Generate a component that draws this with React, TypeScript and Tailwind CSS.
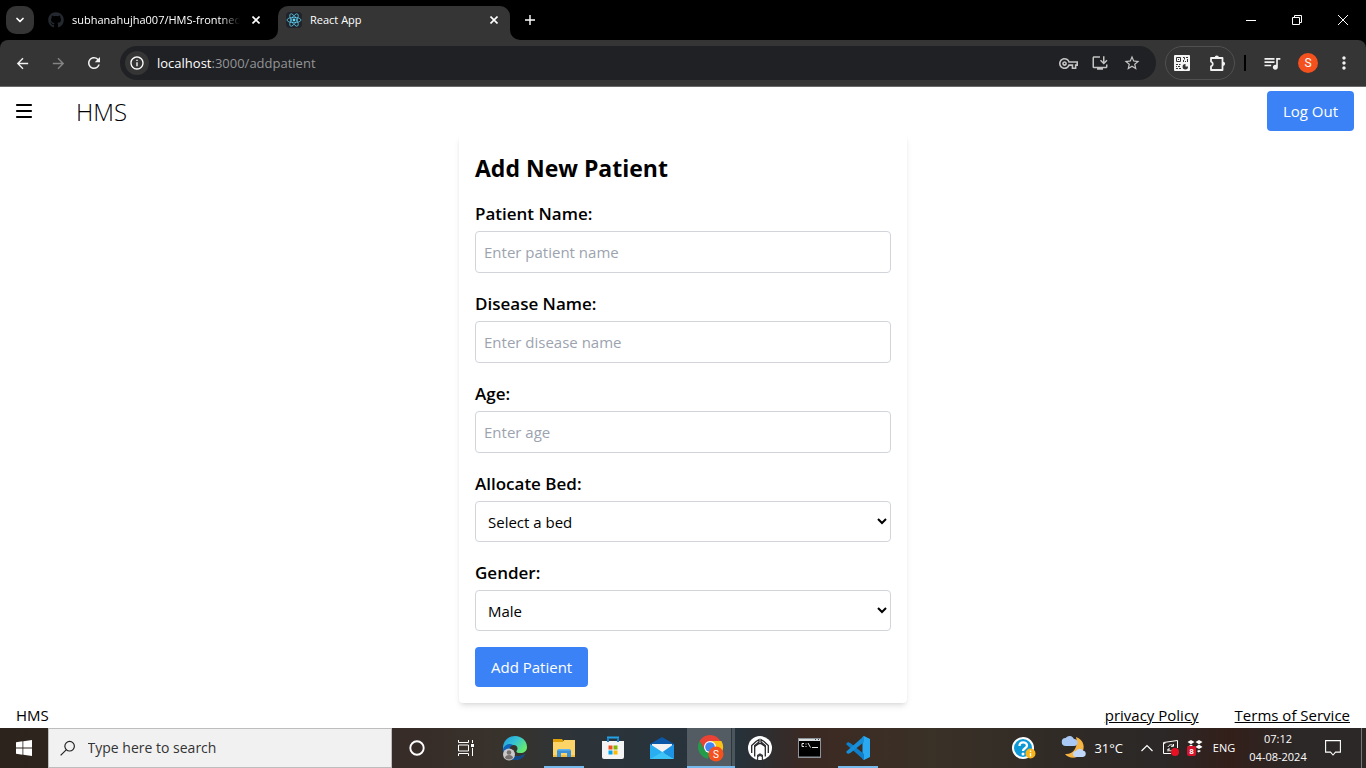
import React, { useState } from "react";
import {
  MdArrowBack,
  MdArrowForward,
  MdInfoOutline,
  MdMoreVert,
  MdOutlineInstallDesktop,
  MdOutlineVpnKey,
  MdQueueMusic,
  MdRefresh,
  MdStarOutline,
} from "react-icons/md";
import { FaGithub } from "react-icons/fa";
import { ChevronDown } from "lucide-react";

type Children = { children: React.ReactNode };

function CloseIcon() {
  return (
    <svg width="8" height="8" viewBox="0 0 8 8" fill="none" stroke="#fff" strokeWidth="1.6">
      <path d="M0.5 0.5 7.5 7.5M7.5 0.5 0.5 7.5" />
    </svg>
  );
}

function ReactLogo() {
  return (
    <svg width="16" height="16" viewBox="0 0 16 16" className="rounded-sm bg-[#20232a]">
      <g fill="none" stroke="#61dafb" strokeWidth="0.7">
        <ellipse cx="8" cy="8" rx="7" ry="2.7" />
        <ellipse cx="8" cy="8" rx="7" ry="2.7" transform="rotate(60 8 8)" />
        <ellipse cx="8" cy="8" rx="7" ry="2.7" transform="rotate(120 8 8)" />
      </g>
      <circle cx="8" cy="8" r="1.4" fill="#61dafb" />
    </svg>
  );
}

function TabStrip() {
  return (
    <div className="flex h-10 bg-black text-[12px] text-white">
      <div className="flex w-[268px] items-center pl-1.5">
        <button aria-label="Search tabs" className="flex size-7 items-center justify-center rounded-[10px] bg-[#353535]">
          <ChevronDown size={12} strokeWidth={3.5} />
        </button>
        <div className="ml-3.5 flex flex-1 items-center">
          <FaGithub size={16} color="#24292f" />
          <span className="ml-2 w-[168px] overflow-hidden whitespace-nowrap text-[11px] [mask-image:linear-gradient(to_right,#000_88%,transparent)]">
            subhanahujha007/HMS-frontned
          </span>
          <button aria-label="Close tab" className="ml-3"><CloseIcon /></button>
        </div>
      </div>
      <div className="flex w-2.5 items-end bg-[#353535]">
        <div className="h-10 w-2.5 rounded-br-[10px] bg-black" />
      </div>
      <div className="flex w-[232px] flex-col bg-black pt-1.5">
        <div className="flex flex-1 items-center rounded-t-[10px] bg-[#353535] pb-1.5 pl-2 pr-3">
          <ReactLogo />
          <span className="ml-2 flex-1 text-[11px]">React App</span>
          <button aria-label="Close tab"><CloseIcon /></button>
        </div>
      </div>
      <div className="flex flex-1 bg-[#353535]">
        <div className="flex flex-1 items-center rounded-bl-[10px] bg-black pl-[15px]">
          <button aria-label="New tab">
            <svg width="10" height="10" viewBox="0 0 10 10" stroke="#fff" strokeWidth="1.4"><path d="M5 0V10M0 5H10" /></svg>
          </button>
          <div className="flex-1" />
          <button aria-label="Minimize" className="flex w-[46px] justify-center">
            <svg width="10" height="10" viewBox="0 0 10 10"><path d="M0 5h10v1H0z" fill="#fff" /></svg>
          </button>
          <button aria-label="Restore" className="flex w-[46px] justify-center">
            <svg width="10" height="10" viewBox="0 0 10 10" fill="none" stroke="#fff"><path d="M.5 2.500h7v7h-7zM2.500 2.500v-2h7v7h-2" /></svg>
          </button>
          <button aria-label="Close" className="flex w-[46px] justify-center">
            <svg width="10" height="10" viewBox="0 0 10 10" stroke="#fff"><path d="M0 0 10 10M10 0 0 10" /></svg>
          </button>
        </div>
      </div>
    </div>
  );
}

function ToolButton({ label, children }: Children & { label: string }) {
  return (
    <button aria-label={label} className="flex h-8 w-9 shrink-0 items-center justify-center text-[#f1f1f1]">
      {children}
    </button>
  );
}

function QrIcon() {
  return (
    <svg width="16" height="16" viewBox="0 0 16 16">
      <rect width="16" height="16" rx="1" fill="#f5f5f5" />
      <g fill="none" stroke="#353535">
        <path d="M2.500 2.500h4v4h-4zM9 2.500h1.500v2M9.500 5v2M11 6.500h1M13.500 2v1M13.500 4v3M2 9.500h2M5 9.500h1.500M2.500 11v1M4 11.500h2M2 13.500h2M5 13.500h2" />
      </g>
      <path d="M4 4h1v1H4zM12 2h1v1h-1z" fill="#353535" />
      <path d="M11.500 9v2.500H14a2.700 2.700 0 1 1-2.500-2.500z" fill="#353535" />
    </svg>
  );
}

function PuzzleIcon() {
  return (
    <svg width="18" height="18" viewBox="0 0 18 18">
      <path
        d="M2 4h11.500v12H2v-3.600a2.500 2.500 0 0 0 0-4.800z"
        fill="none"
        stroke="#f1f1f1"
        strokeWidth="1.800"
        strokeLinejoin="round"
      />
      <path d="M5.700 3.500a2.100 2.100 0 0 1 4.200 0zM14 7.700a2.100 2.100 0 0 1 0 4.200z" fill="#f1f1f1" />
    </svg>
  );
}

function Toolbar() {
  return (
    <div className="bg-black">
      <div className="flex h-[47px] items-center rounded-t-lg border-b border-[#6a6a6a] bg-[#353535] px-1">
        <ToolButton label="Back"><MdArrowBack size={17} /></ToolButton>
        <ToolButton label="Forward"><MdArrowForward size={17} color="#848484" /></ToolButton>
        <ToolButton label="Reload"><MdRefresh size={18} /></ToolButton>
        <div className="ml-2 flex h-[34px] min-w-0 flex-1 items-center rounded-full bg-[#202124] pl-[5px] pr-[9px]">
          <button aria-label="Site information" className="flex size-6 items-center justify-center rounded-full bg-[#353535] text-white">
            <MdInfoOutline size={16} />
          </button>
          <span className="ml-2 flex-1 text-[13px] text-[#939598]">
            <span className="text-white">localhost</span>:3000/addpatient
          </span>
          <div className="flex gap-[2px]">
            {[
              { label: "Passwords", icon: <MdOutlineVpnKey size={19} /> },
              { label: "Install app", icon: <MdOutlineInstallDesktop size={18} /> },
              { label: "Bookmark", icon: <MdStarOutline size={18} /> },
            ].map((b) => (
              <button key={b.label} aria-label={b.label} className="flex w-[30px] items-center justify-center text-[#c4c4c4]">
                {b.icon}
              </button>
            ))}
          </div>
        </div>
        <div className="ml-[9px] flex h-[34px] w-[70px] items-center justify-center rounded-full border border-[#505050]">
          <ToolButton label="QR code"><QrIcon /></ToolButton>
          <ToolButton label="Extensions"><PuzzleIcon /></ToolButton>
        </div>
        <div className="ml-[9px] h-4 w-[2px] bg-black" />
        <div className="ml-2 flex">
          <ToolButton label="Media controls"><MdQueueMusic size={20} /></ToolButton>
          <ToolButton label="Profile">
            <span className="flex size-5 items-center justify-center rounded-full bg-[#f4511e] font-[Roboto,sans-serif] text-[12px] text-white">S</span>
          </ToolButton>
          <ToolButton label="Menu"><MdMoreVert size={20} /></ToolButton>
        </div>
      </div>
    </div>
  );
}

function Field({ id, label, children }: Children & { id: string; label: string }) {
  return (
    <div className="mb-4">
      <label htmlFor={id} className="block pb-[3px] pt-px text-[17px] font-[550] leading-7">{label}</label>
      {children}
    </div>
  );
}

const textFields = [
  { id: "patient", label: "Patient Name:", placeholder: "Enter patient name" },
  { id: "disease", label: "Disease Name:", placeholder: "Enter disease name" },
  { id: "age", label: "Age:", placeholder: "Enter age" },
];

const selectFields = [
  { id: "bed", label: "Allocate Bed:", options: ["Select a bed"] },
  { id: "gender", label: "Gender:", options: ["Male", "Female", "Other"] },
];

function PatientForm() {
  const [values, setValues] = useState<Record<string, string>>({});
  const set = (id: string, value: string) => setValues({ ...values, [id]: value });
  return (
    <form className="mx-auto w-full max-w-md rounded bg-white p-4 shadow-md" onSubmit={(e) => e.preventDefault()}>
      <h2 className="pb-[15px] pt-px text-[23px] font-bold leading-8">Add New Patient</h2>
      {textFields.map((f) => (
        <Field key={f.id} id={f.id} label={f.label}>
          <input
            id={f.id}
            placeholder={f.placeholder}
            value={values[f.id] ?? ""}
            onChange={(e) => set(f.id, e.target.value)}
            className="block h-[42px] w-full rounded border border-[#d1d5db] px-2 placeholder:text-[#9ca3af]"
          />
        </Field>
      ))}
      {selectFields.map((f) => (
        <Field key={f.id} id={f.id} label={f.label}>
          <select
            id={f.id}
            value={values[f.id] ?? f.options[0]}
            onChange={(e) => set(f.id, e.target.value)}
            className="block h-[41px] w-full rounded border border-[#d1d5db] bg-white px-2"
          >
            {f.options.map((o) => <option key={o}>{o}</option>)}
          </select>
        </Field>
      ))}
      <button type="submit" className="h-10 rounded bg-[#3b82f6] px-4 text-white">Add Patient</button>
    </form>
  );
}

function EdgeIcon() {
  return (
    <svg width="26" height="26" viewBox="0 0 26 26">
      <defs>
        <linearGradient id="edgeTop" x1="0" y1="0" x2="1" y2="0.6">
          <stop offset="0" stopColor="#1f9be0" /><stop offset="0.5" stopColor="#35c1d6" /><stop offset="1" stopColor="#66eb6e" />
        </linearGradient>
      </defs>
      <path d="M1 13C1 6 6 1 13 1s12 5 12 11c0 4-3 6-6.500 6-3 0-4.500-1-4-2 2-2 1-6-3-6C7 10 3 12 1 16z" fill="url(#edgeTop)" />
      <path d="M1 14c2-5 7-6 10-4-3 1-4 4-3 7 2 5 9 6 15 2-2 4-6 6-10 6C6 25 1 20 1 14z" fill="#0f63b8" />
      <path d="M8 15c0 7 9 8 15 4-2 4-6 6-10 6-4-2-6-6-5-10z" fill="#114a8b" />
      <circle cx="7" cy="19.500" r="6" fill="#c9c9c9" />
      <circle cx="7" cy="17.500" r="2.300" fill="#77706d" />
      <path d="M3 23c0-4 8-4 8 0a6 6 0 0 1-8 0z" fill="#77706d" />
    </svg>
  );
}

function FolderIcon() {
  return (
    <svg width="24" height="20" viewBox="0 0 24 20">
      <path d="M1 1h9l1.500 2H23v6H1z" fill="#e0a008" />
      <path d="M1 4h10l1-2h11v17H1z" fill="#fdd467" />
      <path d="M1 17h22v2H1z" fill="#f5bd3e" />
      <path d="M5 19v-6.500L6.500 11h11l1.500 1.500V19h-4v-4H9v4z" fill="#3a91d8" />
      <path d="M5 12.500 6.500 11h11l1.500 1.500z" fill="#62b5ee" />
    </svg>
  );
}

function StoreIcon() {
  return (
    <svg width="24" height="24" viewBox="0 0 24 24">
      <path d="M7 6V1.500h10V6" fill="none" stroke="#22a3e8" strokeWidth="2" />
      <path d="M1 5h22v16a2 2 0 0 1-2 2H3a2 2 0 0 1-2-2z" fill="#f4f4f4" />
      <path d="M7 2v4M17 2v4" stroke="#1683ce" strokeWidth="2" />
      <path d="M7.500 9.500h4v4h-4z" fill="#f25022" /><path d="M12.500 9.500h4v4h-4z" fill="#7fba00" />
      <path d="M7.500 14.500h4v4h-4z" fill="#00a4ef" /><path d="M12.500 14.500h4v4h-4z" fill="#ffb900" />
    </svg>
  );
}

function MailIcon() {
  return (
    <svg width="24" height="24" viewBox="0 0 24 24">
      <path d="M0 8 12 1l12 7v4H0z" fill="#0b57a8" />
      <path d="M2 8h20v3l-9 6.500L2 11z" fill="#f3f3f3" />
      <path d="M0 8 13 16.500 24 23H0z" fill="#2aaef2" />
      <path d="M24 8v15L12.500 16z" fill="#1c93e4" />
      <path d="M0 23 24 23 12.500 16z" fill="#3cc3f7" />
    </svg>
  );
}

function ChromeIcon() {
  return (
    <svg width="26" height="28" viewBox="0 0 26 28">
      <path d="M13 7h10.400A12 12 0 0 1 12 25z" fill="#fbc116" />
      <path d="M1.600 7A12 12 0 0 1 22.400 7H12l-5.200 9z" fill="#ea4335" />
      <path d="M1.600 7 6.800 16 12 19l-2 5.800A12 12 0 0 1 1.600 7z" fill="#249b4b" />
      <circle cx="12" cy="13" r="6" fill="#fff" />
      <circle cx="12" cy="13" r="4.800" fill="#4285f4" />
      <circle cx="18" cy="20" r="7.500" fill="#f4511e" />
      <text x="18" y="23.500" textAnchor="middle" fontSize="10" fill="#fff" fontFamily="Roboto, sans-serif">S</text>
    </svg>
  );
}

function ArchIcon() {
  return (
    <svg width="24" height="24" viewBox="0 0 24 24">
      <circle cx="12" cy="12" r="12" fill="#fff" />
      <g fill="none" stroke="#26262a" strokeWidth="1.300">
        <path d="M3.700 17V9.500L8 5.500 11 3.700V6L6.700 9.500V20.500" />
        <path d="M20.300 17V9.500L16 5.500 13 3.700V6l4.300 3.500V20.500" />
        <path d="M6.700 10.500 11 7.500h2l4.300 3" />
      </g>
      <path d="M9 24v-5l3-1.800 3 1.800v5z" fill="#26262a" opacity="0.900" />
      <path d="M10.200 24v-3l1.800-1 1.800 1v3z" fill="#fff" />
    </svg>
  );
}

function TerminalIcon() {
  return (
    <svg width="23" height="20" viewBox="0 0 23 20">
      <path d="M0 0h23v20H0z" fill="#8d9398" />
      <path d="M1 1h21v2H1z" fill="#d9dde0" />
      <path d="M17 1h1v1h-1zM20 1h1v1h-1z" fill="#38424a" />
      <path d="M1 3h21v15.500H1z" fill="#000" />
      <path d="M6 5.500H4v3h2M8 5.500v1M8 8v1M10 5l2.500 4.500M14 9.500h6" fill="none" stroke="#e6e6e6" />
    </svg>
  );
}

function CodeIcon() {
  return (
    <svg width="24" height="24" viewBox="0 0 24 24">
      <path d="M18 0 24 3v18l-6 3-1.500-1V1z" fill="#2aa9f3" />
      <path d="M18 24 1.500 9.500 0 8l2-2 3 1.500L18 18z" fill="#0f7fc9" />
      <path d="M18 0 1.500 14.500 0 16l2 2 3-1.500L18 6z" fill="#178fd8" />
    </svg>
  );
}

function TaskViewIcon() {
  return (
    <svg width="16" height="16" viewBox="0 0 16 16" fill="none" stroke="#fff">
      <path d="M.5 0v2.500h10V0M.5 16v-2.500h10V16M.5 5h10v6H.500zM14.500 0v3M14.500 8v8" />
      <path d="M13 4h3v3h-3z" fill="#fff" stroke="none" />
    </svg>
  );
}

type Task = { name: string; icon: React.ReactNode; open?: boolean; active?: boolean };

const tasks: Task[] = [
  { name: "Cortana", icon: <svg width="16" height="16" viewBox="0 0 16 16"><circle cx="8" cy="8" r="6.700" fill="none" stroke="#fff" strokeWidth="1.900" /></svg> },
  { name: "Task view", icon: <TaskViewIcon /> },
  { name: "Edge", icon: <EdgeIcon /> },
  { name: "File Explorer", icon: <FolderIcon />, open: true },
  { name: "Store", icon: <StoreIcon /> },
  { name: "Mail", icon: <MailIcon /> },
  { name: "Chrome", icon: <ChromeIcon />, active: true },
  { name: "Studio", icon: <ArchIcon /> },
  { name: "Terminal", icon: <TerminalIcon /> },
  { name: "Code", icon: <CodeIcon />, open: true },
];

function TaskButton({ task }: { task: Task }) {
  return (
    <button
      aria-label={task.name}
      className={
        task.active
          ? "flex h-10 w-12 flex-col items-center bg-[linear-gradient(90deg,#535c63_44px,#2c363d_44px,#2c363d_45px,#4a555c_45px)]"
          : "flex h-10 w-12 flex-col items-center"
      }
    >
      <span className="flex flex-1 items-center">{task.icon}</span>
      {task.open && <span className="-mt-0.5 h-0.5 w-10 bg-[#76b9ed]" />}
      {task.active && <span className="-mt-0.5 h-0.5 w-12 bg-[#76b9ed]" />}
    </button>
  );
}

function WeatherIcon() {
  return (
    <svg width="26" height="24" viewBox="0 0 26 24">
      <path d="M15 1c8 3 10 11 5 17-4 5-12 5-16 0 8 1 14-7 11-17z" fill="#f6b443" />
      <path d="M5 10a4 4 0 0 1-.500-8 5 5 0 0 1 8.500 1 3.500 3.500 0 0 1 0 7z" fill="#a9c8f5" />
      <path d="M15 21a3 3 0 0 1 0-6 4 4 0 0 1 7-.500 3.300 3.300 0 0 1 0 6.500z" fill="#c0d7fa" />
    </svg>
  );
}

function HelpIcon() {
  return (
    <svg width="24" height="24" viewBox="0 0 24 24">
      <circle cx="11" cy="12" r="10" fill="#0c99d6" stroke="#fff" strokeWidth="2" />
      <path d="M7.500 10c0-5 7.500-4.500 7.500-.500 0 3-4 2.500-4 5.500" fill="none" stroke="#fff" strokeWidth="2.300" />
      <circle cx="11" cy="18" r="1.500" fill="#fff" />
      <circle cx="18.500" cy="17.500" r="5" fill="#f8b51b" />
      <path d="M18.500 14.500v1.500M18.500 17v3.500" stroke="#fff" strokeWidth="1.300" />
    </svg>
  );
}

function SyncIcon() {
  return (
    <svg width="18" height="18" viewBox="0 0 18 18" fill="none" stroke="#fff">
      <path d="M9 14.500H1.500v-11l14-2V9M1.500 4.500 3.500 4" />
      <path d="M6 8c1-2.500 4-3 5.500-1M11.500 5v2.300H9M11 10c-1 2-4 2.500-5 .5M6 12.500V10h2" />
      <circle cx="13" cy="13" r="4" fill="#e81123" stroke="none" />
    </svg>
  );
}

function DropboxIcon() {
  return (
    <svg width="16" height="16" viewBox="0 0 16 16">
      <path d="m4 0 3.500 2L4 4.200.500 2zM12 0l3.500 2L12 4.200 8.500 2zM4 4.600 7.500 7 4 9 .500 7zM12 4.600 15.500 7 12 9 8.500 7zM12 10l2 1-2.500 1.500L10 11z" fill="#fff" />
      <rect x="0" y="6" width="9" height="10" rx="2" fill="#d8132c" />
      <text x="4.500" y="14" textAnchor="middle" fontSize="8" fontWeight="700" fill="#fff" fontFamily="Roboto, sans-serif">8</text>
    </svg>
  );
}

function Taskbar() {
  return (
    <div className="flex h-10 items-center bg-[linear-gradient(90deg,#2c231d_0%,#372c27_30%,#38332c_37%,#2d3439_42%,#29333b_48%,#26323a_54%,#3b2923_59%,#3c2e24_64%,#393127_69%,#2e2926_80%,#2b2827_85%,#331f1a_90%,#2b2827_95%,#2b2827_100%)] text-white">
      <button aria-label="Start" className="flex h-10 w-12 items-center justify-center">
        <svg width="16" height="16" viewBox="0 0 16 16" fill="#fff">
          <path d="M0 2.200 6.500 1.300V7.500H0zM7.300 1.200 16 0V7.500H7.300zM0 8.400H6.500V14.700L0 13.800zM7.300 8.400H16V16L7.300 14.800z" />
        </svg>
      </button>
      <label className="flex h-10 w-[344px] items-center border border-[#bdbdbd] bg-[#f1f1f1] pl-[11px] text-[#222]">
        <svg width="17" height="17" viewBox="0 0 17 17" fill="none" stroke="#222" strokeWidth="1.300">
          <circle cx="10.500" cy="6" r="5.200" /><path d="M7 9.700.700 16" />
        </svg>
        <input aria-label="Search" placeholder="Type here to search" className="ml-3 w-full min-w-0 bg-transparent text-[14px] placeholder:text-[#333]" />
      </label>
      <div className="ml-px flex gap-px">
        {tasks.map((t) => <TaskButton key={t.name} task={t} />)}
      </div>
      <div className="flex-1" />
      <button aria-label="Help"><HelpIcon /></button>
      <button className="ml-[25px] flex items-center gap-[7px] text-[13px]"><WeatherIcon />31°C</button>
      <button aria-label="Show hidden icons" className="ml-[18px]">
        <svg width="12" height="8" viewBox="0 0 12 8" fill="none" stroke="#fff" strokeWidth="1.200"><path d="M.500 7 6 1.500 11.500 7" /></svg>
      </button>
      <button aria-label="Sync" className="ml-[9px]"><SyncIcon /></button>
      <button aria-label="Dropbox" className="ml-[7px]"><DropboxIcon /></button>
      <button className="ml-[9px] w-6 text-[11px]">ENG</button>
      <button className="ml-[6px] w-[72px] whitespace-nowrap text-[11px] leading-[18px]">07:12<br />04-08-2024</button>
      <button aria-label="Notifications" className="flex w-[38px] justify-center">
        <svg width="16" height="16" viewBox="0 0 16 16" fill="none" stroke="#fff" strokeWidth="1.100"><path d="M.600.600h14.800v11.500H10.500L8 15 5.500 12.100H.600z" /></svg>
      </button>
      <div className="ml-[9px] h-10 w-[5px] border-l border-[#777]" />
    </div>
  );
}

export default function App() {
  return (
    <div className="flex min-h-screen flex-col bg-white font-['Open_Sans','Noto_Sans',sans-serif] text-[15px] leading-6 text-black">
      <TabStrip />
      <Toolbar />
      <main className="flex flex-1 flex-col">
        <nav className="flex h-12 items-center justify-between pl-[15px] pr-3">
          <div className="flex items-center">
            <button aria-label="Open menu">
              <svg width="18" height="16" viewBox="0 0 18 16" stroke="#000" strokeWidth="2.200" strokeLinecap="round">
                <path d="M2 2h14M2 8h14M2 14h14" />
              </svg>
            </button>
            <span className="ml-[43px] pt-0.5 text-[24px] font-light leading-8">HMS</span>
          </div>
          <button className="h-10 rounded bg-[#3b82f6] px-4 text-white">Log Out</button>
        </nav>
        <PatientForm />
        <footer className="flex justify-between px-4">
          <span>HMS</span>
          <div className="flex gap-9">
            <a href="#privacy" className="underline">privacy Policy</a>
            <a href="#terms" className="underline">Terms of Service</a>
          </div>
        </footer>
      </main>
      <Taskbar />
    </div>
  );
}
